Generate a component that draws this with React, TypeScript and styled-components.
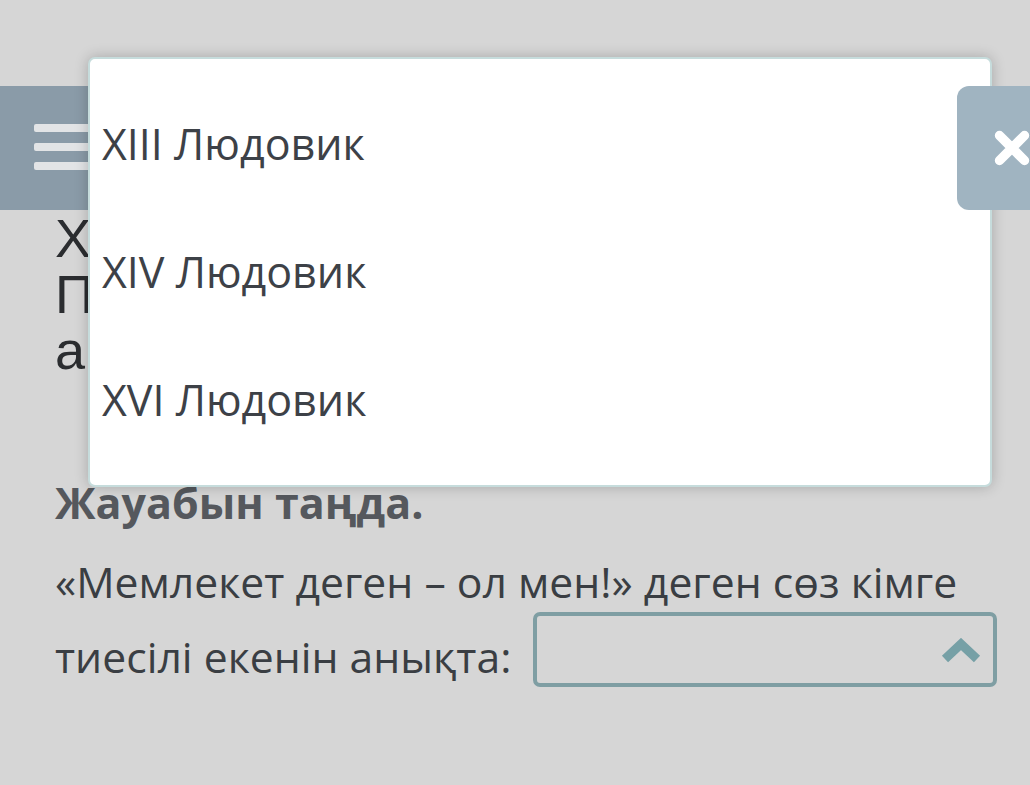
import React, { useState } from "react";
import styled, { createGlobalStyle } from "styled-components";

const GlobalStyle = createGlobalStyle`
  html, body {
    margin: 0;
    padding: 0;
    background: #d6d6d6;
    overflow: hidden;
  }
  body {
    font-family: "Open Sans", "Noto Sans", sans-serif;
    color: #3a3e43;
  }
`;

const Page = styled.div`
  position: relative;
  width: 1030px;
  height: 785px;
  padding-top: 86px;
  box-sizing: border-box;
`;

const Header = styled.div`
  display: flex;
  justify-content: space-between;
  height: 124px;
`;

const MenuButton = styled.button`
  width: 140px;
  height: 124px;
  border: none;
  border-radius: 0 12px 12px 0;
  background: #8a9ba8;
  padding: 38px 0 0 34px;
  display: flex;
  flex-direction: column;
  gap: 11px;
  box-sizing: border-box;
`;

const MenuLine = styled.span`
  display: block;
  width: 70px;
  height: 8px;
  border-radius: 2px;
  background: #e2e4e6;
`;

const CloseButton = styled.button`
  position: relative;
  z-index: 3;
  width: 73px;
  height: 124px;
  border: none;
  border-radius: 12px 0 0 12px;
  background: #a0b4c1;
  padding: 0 0 0 37px;
  display: flex;
  align-items: center;
  overflow: hidden;
  box-sizing: border-box;
`;

const Content = styled.div`
  padding: 0 30px 0 55px;
`;

const Question = styled.p`
  margin: 0;
  font-family: "Liberation Sans", Arial, sans-serif;
  font-size: 54px;
  line-height: 56px;
  color: #2b2d30;
  white-space: nowrap;
`;

const Prompt = styled.h3`
  margin: 99px 0 0;
  font-size: 43px;
  line-height: 52px;
  font-weight: 700;
  color: #55585d;
`;

const Sentence = styled.div`
  margin-top: 15px;
  font-size: 42.7px;
  line-height: 75px;
  color: #3a3e43;
`;

const AnswerRow = styled.div`
  display: flex;
  align-items: flex-start;
  gap: 22px;
`;

const AnswerLabel = styled.span`
  white-space: nowrap;
  flex-shrink: 0;
`;

const SelectBox = styled.div<{ open: boolean }>`
  flex-shrink: 0;
  width: 464px;
  height: 75px;
  margin-top: -7px;
  box-sizing: border-box;
  border: 4px solid #7f9ea3;
  border-radius: 7px;
  display: flex;
  align-items: center;
  justify-content: flex-end;
  padding: 3px 12px 0 0;
  svg {
    transform: ${(p) => (p.open ? "none" : "rotate(180deg)")};
  }
`;

const Dropdown = styled.ul`
  position: absolute;
  z-index: 2;
  left: 88px;
  top: 57px;
  width: 904px;
  height: 430px;
  margin: 0;
  padding: 20px 0 0;
  list-style: none;
  box-sizing: border-box;
  background: #ffffff;
  border: 2px solid #c6dcdc;
  border-radius: 7px;
  box-shadow: 0 0 14px rgba(0, 0, 0, 0.22);
`;

const Option = styled.li`
  height: 128px;
  display: flex;
  align-items: center;
  padding-left: 12px;
  font-size: 43px;
  color: #3d4147;
`;

const options = ["XIII Людовик", "XIV Людовик", "XVI Людовик"];

const App = () => {
  const [open, setOpen] = useState(true);

  return (
    <>
      <GlobalStyle />
      <Page>
        <Header>
          <MenuButton>
            <MenuLine />
            <MenuLine />
            <MenuLine />
          </MenuButton>
          <CloseButton onClick={() => setOpen(false)}>
            <svg width="46" height="46" viewBox="0 0 46 46">
              <path
                d="M7 7 L39 39 M39 7 L7 39"
                stroke="#ffffff"
                strokeWidth="12"
                strokeLinecap="round"
              />
            </svg>
          </CloseButton>
        </Header>
        <Content>
          <Question>
            ХVII ғасырдағы Франция
            <br />
            Патшасы өзін «Күн» атады
            <br />
            абсолютизм өкілі
          </Question>
          <Prompt>Жауабын таңда.</Prompt>
          <Sentence>
            «Мемлекет деген – ол мен!» деген сөз кімге
            <AnswerRow>
              <AnswerLabel>тиесілі екенін анықта:</AnswerLabel>
              <SelectBox open={open} onClick={() => setOpen(!open)}>
                <svg width="40" height="26" viewBox="0 0 40 26">
                  <path
                    d="M4 21 L20 6 L36 21"
                    fill="none"
                    stroke="#76a0a6"
                    strokeWidth="9"
                  />
                </svg>
              </SelectBox>
            </AnswerRow>
          </Sentence>
        </Content>
        {open && (
          <Dropdown>
            {options.map((o) => (
              <Option key={o}>{o}</Option>
            ))}
          </Dropdown>
        )}
      </Page>
    </>
  );
};

export default App;
